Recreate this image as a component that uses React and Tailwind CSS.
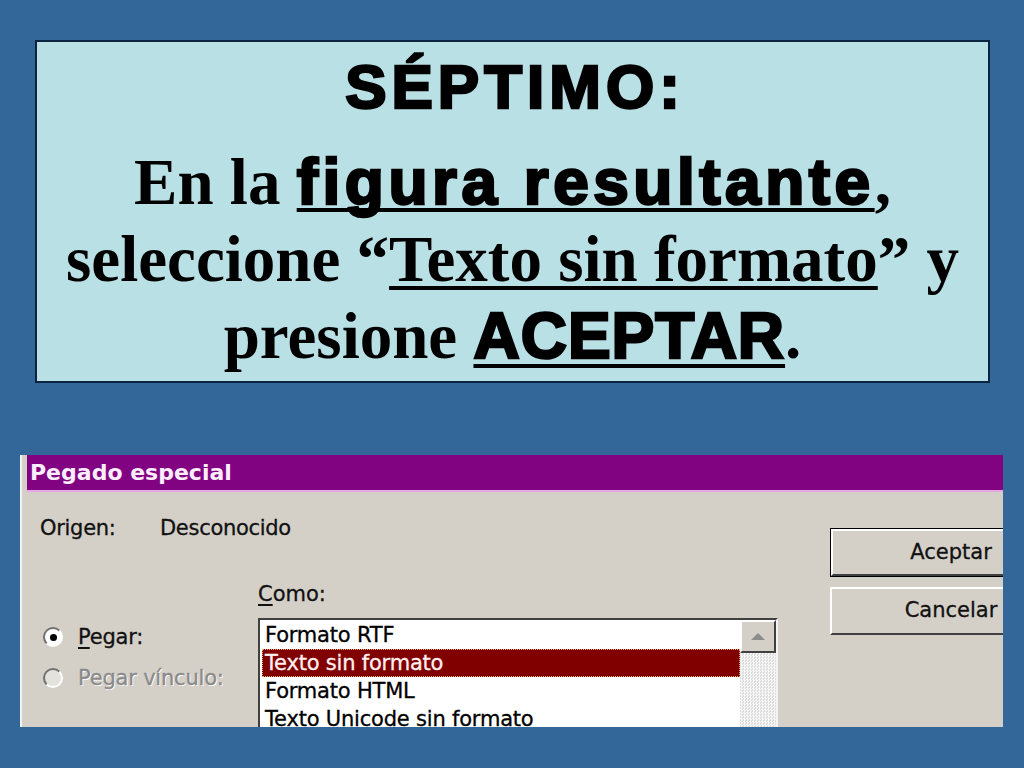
const serif = 'font-["Liberation_Serif",serif]';
const win = 'font-["DejaVu_Sans",sans-serif]';

function Heavy({ children, className = '' }) {
  return (
    <span
      className={`font-["Liberation_Sans",sans-serif] font-bold [-webkit-text-stroke-width:2.6px] [-webkit-text-stroke-color:#000] [paint-order:stroke_fill] ${className}`}
    >
      {children}
    </span>
  );
}

function Radio({ checked, disabled, label, accessKey }) {
  return (
    <div className="flex items-center h-[30px] ml-[3px] gap-[15px]">
      <div
        className={`w-[20px] h-[20px] rounded-full border-2 border-t-[#707070] border-l-[#707070] border-r-white border-b-white flex items-center justify-center ${
          disabled ? 'bg-[#e4e2dc]' : 'bg-white'
        }`}
      >
        {checked && <div className="w-[7px] h-[7px] rounded-full bg-black" />}
      </div>
      <span
        className={`text-[21px] leading-[30px] tracking-[-0.2px] [-webkit-text-stroke:0.3px_currentColor] ${
          disabled ? 'text-[#8a8a8a] [text-shadow:1px_1px_0_#fff]' : 'text-[#111]'
        }`}
      >
        {accessKey && <u className="underline-offset-[3px]">{accessKey}</u>}
        {label}
      </span>
    </div>
  );
}

function Button({ label, isDefault }) {
  const inner = (
    <div className="h-full border-2 border-t-white border-l-white border-r-[#808080] border-b-[#404040] flex items-center justify-center text-[21px] text-[#111] [-webkit-text-stroke:0.3px_currentColor]">
      {label}
    </div>
  );
  return isDefault ? (
    <div className="w-[242px] h-[49px] border border-black">{inner}</div>
  ) : (
    <div className="w-[242px] h-[48px]">{inner}</div>
  );
}

const items = ['Formato RTF', 'Texto sin formato', 'Formato HTML', 'Texto Unicode sin formato'];

export default function App() {
  return (
    <div className="w-[1024px] h-[768px] bg-[#336699] overflow-hidden pt-[40px]">
      <div className="ml-[35px] w-[955px] h-[343px] bg-[#b9e0e5] border-2 border-[#0b2442] pt-[10px] text-center text-black">
        <Heavy className="block text-[62px] leading-[70px] tracking-[5px] pl-[5px]">SÉPTIMO:</Heavy>
        <div className={`${serif} font-bold text-[65px] leading-[77px] mt-[22px]`}>
          En la{' '}
          <Heavy className="text-[64px] tracking-[4.5px] underline decoration-[4px] underline-offset-[4px] [text-decoration-skip-ink:none]">
            figura resultante
          </Heavy>
          ,
          <br />
          seleccione “
          <span className="underline decoration-[4px] underline-offset-[5px] [text-decoration-skip-ink:none]">
            Texto sin formato
          </span>
          ” y
          <br />
          presione{' '}
          <Heavy className="text-[64px] tracking-[1px] underline decoration-[4px] underline-offset-[6px] [text-decoration-skip-ink:none]">
            ACEPTAR
          </Heavy>
          .
        </div>
      </div>

      <div className={`${win} mt-[72px] ml-[20px] w-[983px] h-[272px] overflow-hidden bg-[#d4d0c8] border-l-2 border-[#f2f2f2] flex flex-col`}>
        <div className="ml-[5px] h-[35px] shrink-0 bg-[#820382] flex items-center pl-[3px] text-[22px] font-bold text-[#fdeefd]">
          Pegado especial
        </div>
        <div className="h-[2px] shrink-0 ml-[5px] bg-[#e6a6e2]" />
        <div className="flex">
          <div className="pl-[18px] flex flex-col">
            <div className="flex mt-[25px] h-[24px] items-center text-[21px] tracking-[-0.3px] text-[#111] [-webkit-text-stroke:0.3px_currentColor]">
              <span className="w-[120px]">Origen:</span>
              <span>Desconocido</span>
            </div>
            <div className="flex mt-[42px]">
              <div className="w-[218px] pt-[39px] flex flex-col gap-[11px]">
                <Radio checked label="egar:" accessKey="P" />
                <Radio disabled label="Pegar vínculo:" />
              </div>
              <div className="flex flex-col">
                <div className="h-[24px] flex items-center text-[21px] text-[#111] [-webkit-text-stroke:0.3px_currentColor]">
                  <u className="underline-offset-[3px]">C</u>omo:
                </div>
                <div className="mt-[11px] w-[520px] h-[140px] bg-white border-2 border-t-[#404040] border-l-[#404040] border-r-[#f4f4f4] border-b-[#f4f4f4] flex">
                  <div className="flex-1 pt-[1px] pl-[2px]">
                    {items.map((it, i) => (
                      <div
                        key={it}
                        className={`h-[28px] leading-[28px] pl-[3px] text-[21px] tracking-[-0.2px] whitespace-nowrap [-webkit-text-stroke:0.3px_currentColor] ${
                          i === 1
                            ? 'bg-[#800000] text-[#fff0f0] outline outline-1 outline-dotted outline-[#d8b070] -outline-offset-1'
                            : 'text-black'
                        }`}
                      >
                        {it}
                      </div>
                    ))}
                  </div>
                  <div className="w-[36px] flex flex-col [background-image:repeating-conic-gradient(#f6f6f6_0_25%,#dcdcdc_0_50%)] [background-size:3px_3px]">
                    <div className="h-[33px] bg-[#d4d0c8] border-2 border-t-white border-l-white border-r-[#404040] border-b-[#404040] flex items-center justify-center">
                      <svg width="16" height="9" viewBox="0 0 16 9">
                        <polygon points="8,1 15,8 1,8" fill="#8c8c8c" />
                      </svg>
                    </div>
                  </div>
                </div>
              </div>
            </div>
          </div>
          <div className="ml-[52px] pt-[36px] flex flex-col gap-[10px]">
            <Button label="Aceptar" isDefault />
            <Button label="Cancelar" />
          </div>
        </div>
      </div>
    </div>
  );
}
